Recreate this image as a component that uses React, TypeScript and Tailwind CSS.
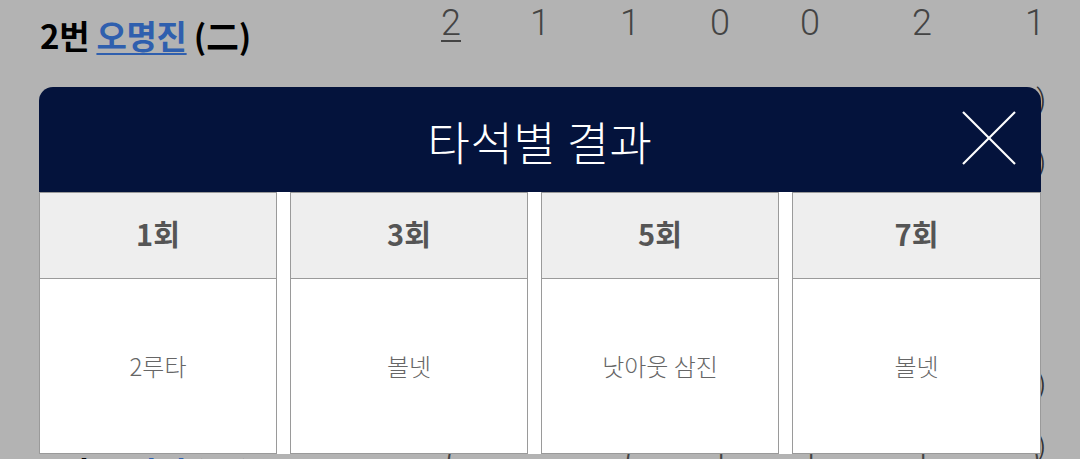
import React from 'react';

const innings = [
  { label: '1회', result: '2루타' },
  { label: '3회', result: '볼넷' },
  { label: '5회', result: '낫아웃 삼진' },
  { label: '7회', result: '볼넷' },
];

// horizontal offsets of the score columns (each 30px wide)
const colMargins = ['ml-0', 'ml-[59px]', 'ml-[60px]', 'ml-[60px]', 'ml-[60px]', 'ml-[82px]', 'ml-[83px]'];

function ScoreCells({ values, top }: { values: string[]; top: string }) {
  return (
    <div className={`flex ${top}`}>
      {values.map((v, i) => (
        <span
          key={i}
          className={`${colMargins[i]} w-[30px] text-center text-[36px] leading-[36px] font-light text-[#444] font-['Roboto',sans-serif] ${
            i === 0 && v === '2' ? 'text-[#2f5fae] underline underline-offset-[5px] decoration-2' : ''
          }`}
        >
          {v}
        </span>
      ))}
    </div>
  );
}

function PlayerRow({ no, name, hanja, scores, className }: { no: string; name: string; hanja: string; scores: string[]; className: string }) {
  return (
    <div className={`flex pl-[40px] ${className}`}>
      <div className="w-[396px] text-[33px] leading-[33px] font-bold text-black tracking-[-0.3px]">
        {no} <span className="text-[#2f5fae] underline underline-offset-[4px] decoration-2">{name}</span> {hanja}
      </div>
      <ScoreCells values={scores} top="-mt-[14px]" />
    </div>
  );
}

function ParenRow() {
  return (
    <div className="h-[62px] flex items-center justify-end pr-[34px] text-[30px] font-light text-[#333] font-['Roboto',sans-serif]">
      )
    </div>
  );
}

function CloseIcon() {
  return (
    <svg width="54" height="54" viewBox="0 0 54 54" fill="none" stroke="white" strokeWidth="2.2">
      <line x1="1" y1="1" x2="53" y2="53" />
      <line x1="53" y1="1" x2="1" y2="53" />
    </svg>
  );
}

export default function App() {
  return (
    <div className="relative w-full h-[459px] overflow-hidden bg-[#b3b3b3] font-['Noto_Sans_CJK_KR','Noto_Sans',sans-serif]">
      {/* lineup rows under the dim layer */}
      <div className="flex flex-col">
        <div className="h-[68px] pt-[19px]">
          <PlayerRow no="2번" name="오명진" hanja="(二)" scores={['2', '1', '1', '0', '0', '2', '1']} className="" />
        </div>
        <ParenRow />
        <ParenRow />
        <div className="h-[160px]" />
        <ParenRow />
        <ParenRow />
        <PlayerRow no="3번" name="오명진" hanja="(三)" scores={['(', '', '(', '1', '1', '1', ')']} className="-mt-[20px]" />
      </div>

      {/* at-bat results popup */}
      <div className="absolute left-[39px] top-[87px] w-[1002px]">
        <div className="relative h-[105px] bg-[#04133c] rounded-t-[14px] flex items-center justify-center">
          <h1 className="text-[46px] leading-none font-light text-white tracking-[0.5px]">타석별 결과</h1>
          <button className="absolute left-[923px] top-[24px]">
            <CloseIcon />
          </button>
        </div>
        <div className="h-[262px] bg-white flex gap-[13px]">
          {innings.map((it, i) => (
            <div
              key={it.label}
              className={`${i === 3 ? 'flex-1' : 'w-[238px]'} flex flex-col border border-[#9a9a9a]`}
            >
              <div className="h-[86px] bg-[#eeeeee] border-b border-[#9a9a9a] flex items-center justify-center pb-[4px]">
                <span className="text-[29px] font-bold text-[#555]">{it.label}</span>
              </div>
              <div className="flex-1 flex items-center justify-center">
                <span className="text-[24px] font-light text-[#666]">{it.result}</span>
              </div>
            </div>
          ))}
        </div>
      </div>
    </div>
  );
}
